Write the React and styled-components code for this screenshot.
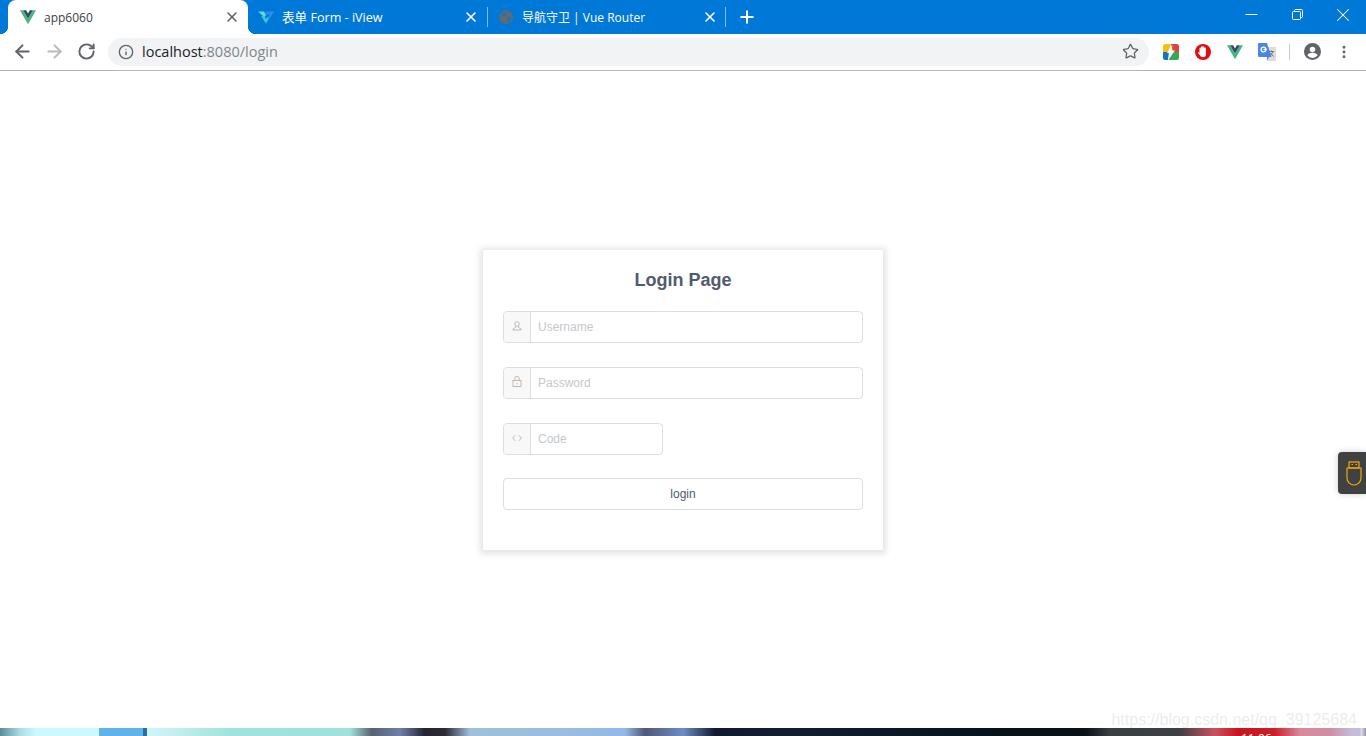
import styled, { createGlobalStyle } from 'styled-components';
import { ArrowLeft, ArrowRight, RotateCw, Info, Star, X, Plus, Minus, MoreVertical } from 'lucide-react';

const GlobalStyle = createGlobalStyle`
  html, body, #root {
    height: 100%;
    margin: 0;
  }
  body {
    background: #fff;
    font-family: "Liberation Sans", Arial, sans-serif;
    overflow: hidden;
  }
  * {
    box-sizing: border-box;
  }
`;

const Screen = styled.div`
  position: relative;
  display: flex;
  flex-direction: column;
  height: 100%;
  overflow: hidden;
`;

// Chrome: tabs
const TabBar = styled.div`
  display: flex;
  align-items: stretch;
  flex: none;
  height: 34px;
  padding-left: 8px;
  background: #0078d7;
`;

const Tab = styled.div`
  position: relative;
  display: flex;
  align-items: center;
  flex: none;
  width: ${({ $width }) => $width}px;
  padding: 0 8px 0 ${({ $active }) => ($active ? 12 : 10)}px;
  background: ${({ $active }) => ($active ? '#fff' : 'transparent')};
  border-radius: 8px 8px 0 0;
  color: ${({ $active }) => ($active ? '#3c4043' : '#fff')};

  ${({ $active }) =>
    $active &&
    `
    &::before, &::after {
      content: '';
      position: absolute;
      bottom: 0;
      width: 8px;
      height: 8px;
      background: radial-gradient(circle at ${'var(--cx)'} 0, #0078d7 8px, #fff 8.5px);
    }
    &::before { left: -8px; --cx: 0; }
    &::after { right: -8px; --cx: 100%; }
  `}
`;

const TabTitle = styled.span`
  flex: 1;
  margin: 2px 0 0 8px;
  font-family: "Open Sans", "Noto Sans CJK SC", sans-serif;
  font-size: ${({ $size }) => $size || 12}px;
  line-height: 16px;
  height: 16px;
  white-space: nowrap;
`;

const TabClose = styled.span`
  display: flex;
  margin-right: ${({ $mr }) => $mr}px;
  color: ${({ $active }) => ($active ? '#5f6368' : '#fff')};
`;

const TabDivider = styled.div`
  flex: none;
  width: 1px;
  height: 20px;
  margin-top: 7px;
  background: #7fbbeb;
`;

const NewTab = styled.div`
  display: flex;
  align-items: center;
  margin-left: 11px;
  color: #fff;
`;

const WindowControls = styled.div`
  display: flex;
  margin-left: auto;
`;

const WindowButton = styled.div`
  display: flex;
  align-items: center;
  justify-content: center;
  width: 46px;
  height: 29px;
  color: #fff;
`;

// Chrome: toolbar
const Toolbar = styled.div`
  display: flex;
  align-items: center;
  flex: none;
  height: 37px;
  padding: 0 5px 1px 6px;
  background: #fff;
  border-bottom: 1px solid #b5b5b5;
`;

const ToolButton = styled.div`
  display: flex;
  align-items: center;
  justify-content: center;
  flex: none;
  width: 32px;
  height: 32px;
  color: ${({ $muted }) => ($muted ? '#b8babc' : '#5f6368')};
`;

const Omnibox = styled.div`
  display: flex;
  align-items: center;
  flex: none;
  width: 1041px;
  height: 28px;
  margin: 0 6px;
  padding: 0 10px 0 10px;
  background: #f1f3f4;
  border-radius: 14px;
  color: #5f6368;
`;

const Url = styled.div`
  flex: 1;
  margin-left: 8px;
  font-family: "Open Sans", sans-serif;
  font-size: 14.5px;
  color: #80868b;

  b {
    font-weight: 400;
    color: #202124;
  }
`;

const ToolDivider = styled.div`
  flex: none;
  width: 1px;
  height: 16px;
  margin: 0 6px;
  background: #c8c9ca;
`;

// Page
const Main = styled.main`
  display: flex;
  align-items: center;
  justify-content: center;
  flex: 1;
`;

const LoginCard = styled.form`
  width: 400px;
  padding: 20px 20px 40px;
  background: #fff;
  box-shadow: 0 1px 6px 3px rgba(0, 0, 0, 0.11);
`;

const Heading = styled.h2`
  margin: 0 0 20px;
  font-size: 18px;
  line-height: 21px;
  font-weight: 700;
  text-align: center;
  color: #515a6e;
`;

const Field = styled.div`
  display: flex;
  width: ${({ $width }) => $width || 360}px;
  height: 32px;
  margin-bottom: ${({ $mb }) => $mb || 24}px;
  border: 1px solid #dcdee2;
  border-radius: 4px;
`;

const Prepend = styled.div`
  display: flex;
  align-items: center;
  justify-content: center;
  flex: none;
  width: 27px;
  padding-bottom: 2px;
  background: #f8f8f9;
  border-right: 1px solid #dcdee2;
  border-radius: 3px 0 0 3px;
  color: #a9acb1;
`;

const Input = styled.input`
  flex: 1;
  min-width: 0;
  padding: 0 7px;
  border: 0;
  outline: 0;
  background: transparent;
  font-family: "Liberation Sans", Arial, sans-serif;
  font-size: 12px;
  color: #515a6e;

  &::placeholder {
    color: #c5c8ce;
    opacity: 1;
  }
`;

const LoginButton = styled.button`
  display: block;
  width: 100%;
  height: 32px;
  padding: 0;
  background: #fff;
  border: 1px solid #dcdee2;
  border-radius: 4px;
  font-family: "Liberation Sans", Arial, sans-serif;
  font-size: 12px;
  color: #515a6e;
`;

// Overlays and the desktop strip
const SideHandle = styled.div`
  position: absolute;
  top: 452px;
  right: 0;
  display: flex;
  align-items: center;
  justify-content: center;
  width: 28px;
  height: 42px;
  padding-left: 3px;
  background: #3f4143;
  border-radius: 4px 0 0 4px;
  box-shadow: 0 0 6px rgba(0, 0, 0, 0.2);
`;

const Watermark = styled.div`
  position: absolute;
  right: 9px;
  bottom: 6px;
  font-family: "Liberation Sans", Arial, sans-serif;
  font-size: 16px;
  line-height: 20px;
  color: rgba(190, 190, 190, 0.3);
  white-space: nowrap;
`;

const DesktopStrip = styled.div`
  position: relative;
  flex: none;
  height: 8px;
  overflow: hidden;
  background: linear-gradient(
    90deg,
    #5d8a9c 0,
    #a8dde4 20px,
    #ccfafc 36px,
    #ccfafc 99px,
    #5fb3e8 99px,
    #5fb3e8 143px,
    #2a6f9d 143px,
    #2a6f9d 147px,
    #ccf8fb 147px,
    #c6efec 175px,
    #9fe3da 230px,
    #9ee2da 350px,
    #5a5f70 372px,
    #7080a8 400px,
    #25242f 425px,
    #2b2a36 445px,
    #9fc0d8 470px,
    #9bbde0 560px,
    #93b8e8 625px,
    #4f5778 645px,
    #6f8cc4 683px,
    #101a2e 715px,
    #141d30 790px,
    #08101a 1000px,
    #0a1018 1085px,
    #3a3f42 1110px,
    #3f3f42 1180px,
    #c9525f 1215px,
    #c8141f 1238px,
    #c8202a 1275px,
    #d98a9c 1300px,
    #cf8ea6 1330px,
    #c4bcd8 1352px,
    #c4bcd8 1360px,
    #e0e0e8 1361px,
    #9a93b0 1366px
  );
`;

const Clock = styled.span`
  position: absolute;
  top: 4px;
  left: 1241px;
  font-family: "Open Sans", sans-serif;
  font-size: 12px;
  line-height: 14px;
  color: #fff;
`;

// Drawn icons
const VueLogo = ({ size = 16 }) => (
  <svg width={size} height={size} viewBox="0 0 24 24">
    <path d="M0 2h4.8L12 14.4 19.2 2H24L12 22.8z" fill="#41b883" />
    <path d="M4.8 2h4.4L12 6.9 14.8 2h4.4L12 14.4z" fill="#35495e" />
  </svg>
);

const IViewLogo = () => (
  <svg width="16" height="16" viewBox="0 0 16 16">
    <path d="M0 2.5h6L8 6 6.6 8.4z" fill="#5cdbd3" />
    <path d="M3.2 7l3 0L8 10l1-1.8 2.6 0L8 14.5z" fill="#3fc6d8" />
    <path d="M7 2.5h9L12 9.2H9.4l2.2-3.7H8.6z" fill="#2d8cf0" />
  </svg>
);

const GlobeIcon = () => (
  <svg width="16" height="16" viewBox="0 0 16 16">
    <circle cx="8" cy="8" r="7" fill="#666a70" />
    <path d="M3 3.5l3 .5 2.5 2-1.5 2-3-1zM10 8l3.5 0-1 4-2.5 1.5L8.5 10zM8 1.6l3.5.6-2 2z" fill="#0078d7" opacity=".75" />
  </svg>
);

const AppsIcon = () => (
  <svg width="16" height="16" viewBox="0 0 16 16">
    <path d="M2.5 0H8L5 8H0V2.5A2.5 2.5 0 0 1 2.5 0z" fill="#f4c20d" />
    <path d="M8 0h5.500A2.500 2.500 0 0 1 16 2.500V8h-6z" fill="#db4437" />
    <path d="M0 8h6l-1 8H2.500A2.500 2.500 0 0 1 0 13.500z" fill="#1a73b8" />
    <path d="M8 8h8v5.500a2.500 2.500 0 0 1-2.500 2.500H6z" fill="#3aa757" />
    <path d="M9.500 1L4 9h3.500l-1.500 6 6-8.500H8.500z" fill="#fff" />
  </svg>
);

const StopIcon = () => (
  <svg width="16" height="16" viewBox="0 0 16 16">
    <circle cx="8" cy="8" r="8" fill="#e10c0c" />
    <path
      d="M4.500 9V4.200a.8.8 0 0 1 1.600 0V3a.8.8 0 0 1 1.600 0 .8.8 0 0 1 1.600 0v1.200a.8.8 0 0 1 1.600 0v6c0 2-1.200 3-3 3-1.500 0-2.400-.7-3.200-2.200L3 9c-.4-.9.800-1.400 1.500 0z"
      fill="#fff"
    />
  </svg>
);

const TranslateIcon = () => (
  <svg width="18" height="18" viewBox="0 0 18 18">
    <path d="M7 4h10a1 1 0 0 1 1 1v12a1 1 0 0 1-1 1H9.500z" fill="#dcdcdc" />
    <path d="M1 0h8l4.500 14H1a1 1 0 0 1-1-1V1a1 1 0 0 1 1-1z" fill="#4a86e8" />
    <path d="M9.500 14l-1 4 2.500-4z" fill="#3367c4" />
    <circle cx="5.500" cy="6.500" r="2.400" fill="none" stroke="#fff" strokeWidth="1.300" />
    <path d="M5.500 6.500h3" stroke="#fff" strokeWidth="1.200" />
    <path d="M11 8.500h5M13.500 7.500v1M12 13.500l3-5M12.500 10l3 3.500" stroke="#777" strokeWidth="1" fill="none" />
  </svg>
);

const AvatarIcon = () => (
  <svg width="17" height="17" viewBox="0 0 18 18">
    <circle cx="9" cy="9" r="9" fill="#5f6368" />
    <circle cx="9" cy="6.800" r="2.900" fill="#fff" />
    <path d="M3.500 13c1-2 3.500-2.700 5.500-2.700s4.500.7 5.500 2.700A7 7 0 0 1 9 15.800 7 7 0 0 1 3.500 13z" fill="#fff" />
  </svg>
);

const RestoreIcon = () => (
  <svg width="11" height="11" viewBox="0 0 11 11" fill="none" stroke="#fff" strokeWidth="1">
    <rect x="0.500" y="2.500" width="8" height="8" rx="1" />
    <path d="M2.500 2.500v-1a1 1 0 0 1 1-1h6a1 1 0 0 1 1 1v6a1 1 0 0 1-1 1h-1" />
  </svg>
);

const UserOutline = () => (
  <svg width="10" height="10" viewBox="0 0 10 10" fill="none" stroke="currentColor" strokeWidth="0.800">
    <circle cx="5" cy="3" r="2.300" />
    <path d="M3.800 5.200L3.500 6.500 1 8v1h8V8L6.500 6.500 6.200 5.200" />
  </svg>
);

const LockOutline = () => (
  <svg width="10" height="11" viewBox="0 0 10 11" fill="none" stroke="#b9a9a0" strokeWidth="0.800">
    <rect x="1" y="4.500" width="8" height="6" />
    <path d="M2.800 4.500V2.600a2.200 2.200 0 0 1 4.400 0v1.900" />
    <path d="M5 7v1.300" />
  </svg>
);

const CodeOutline = () => (
  <svg width="10" height="8" viewBox="0 0 10 8" fill="none" stroke="currentColor" strokeWidth="0.800">
    <path d="M3 1.200L.7 4 3 6.800M7 1.200L9.300 4 7 6.800" />
  </svg>
);

const UsbIcon = () => (
  <svg width="16" height="25" viewBox="0 0 16 25" fill="none" stroke="#f5a800" strokeWidth="1.200">
    <rect x="3" y="1" width="10" height="6" />
    <path d="M5.500 3.500h1.500M9.500 3.500h1.500" />
    <path d="M1 7h14v10a7 7 0 0 1-14 0z" />
  </svg>
);

export default function App() {
  return (
    <Screen>
      <GlobalStyle />

      <TabBar>
        <Tab $active $width={240}>
          <VueLogo />
          <TabTitle>app6060</TabTitle>
          <TabClose $active $mr={0}><X size={16} strokeWidth={2.4} /></TabClose>
        </Tab>
        <Tab $width={239}>
          <IViewLogo />
          <TabTitle $size={12.6}>表单 Form - iView</TabTitle>
          <TabClose $mr={0}><X size={16} strokeWidth={2.4} /></TabClose>
        </Tab>
        <TabDivider />
        <Tab $width={237}>
          <GlobeIcon />
          <TabTitle>导航守卫 | Vue Router</TabTitle>
          <TabClose $mr={-1}><X size={16} strokeWidth={2.4} /></TabClose>
        </Tab>
        <TabDivider />
        <NewTab><Plus size={20} strokeWidth={2.4} /></NewTab>
        <WindowControls>
          <WindowButton><Minus size={19} strokeWidth={1.3} /></WindowButton>
          <WindowButton><RestoreIcon /></WindowButton>
          <WindowButton><X size={22} strokeWidth={1.1} /></WindowButton>
        </WindowControls>
      </TabBar>

      <Toolbar>
        <ToolButton><ArrowLeft size={21} strokeWidth={2.3} /></ToolButton>
        <ToolButton $muted><ArrowRight size={21} strokeWidth={2.3} /></ToolButton>
        <ToolButton><RotateCw size={19} strokeWidth={2.4} /></ToolButton>
        <Omnibox>
          <Info size={16} strokeWidth={2} />
          <Url><b>localhost</b>:8080/login</Url>
          <Star size={17} strokeWidth={1.8} />
        </Omnibox>
        <ToolButton><AppsIcon /></ToolButton>
        <ToolButton><StopIcon /></ToolButton>
        <ToolButton><VueLogo /></ToolButton>
        <ToolButton><TranslateIcon /></ToolButton>
        <ToolDivider />
        <ToolButton><AvatarIcon /></ToolButton>
        <ToolButton><MoreVertical size={16} strokeWidth={2.4} /></ToolButton>
      </Toolbar>

      <Main>
        <LoginCard onSubmit={(e) => e.preventDefault()}>
          <Heading>Login Page</Heading>
          <Field>
            <Prepend><UserOutline /></Prepend>
            <Input placeholder="Username" />
          </Field>
          <Field>
            <Prepend><LockOutline /></Prepend>
            <Input placeholder="Password" type="password" />
          </Field>
          <Field $width={160} $mb={23}>
            <Prepend><CodeOutline /></Prepend>
            <Input placeholder="Code" />
          </Field>
          <LoginButton type="submit">login</LoginButton>
        </LoginCard>
      </Main>

      <DesktopStrip>
        <Clock>11:06</Clock>
      </DesktopStrip>

      <SideHandle><UsbIcon /></SideHandle>
      <Watermark>https://blog.csdn.net/qq_39125684</Watermark>
    </Screen>
  );
}
